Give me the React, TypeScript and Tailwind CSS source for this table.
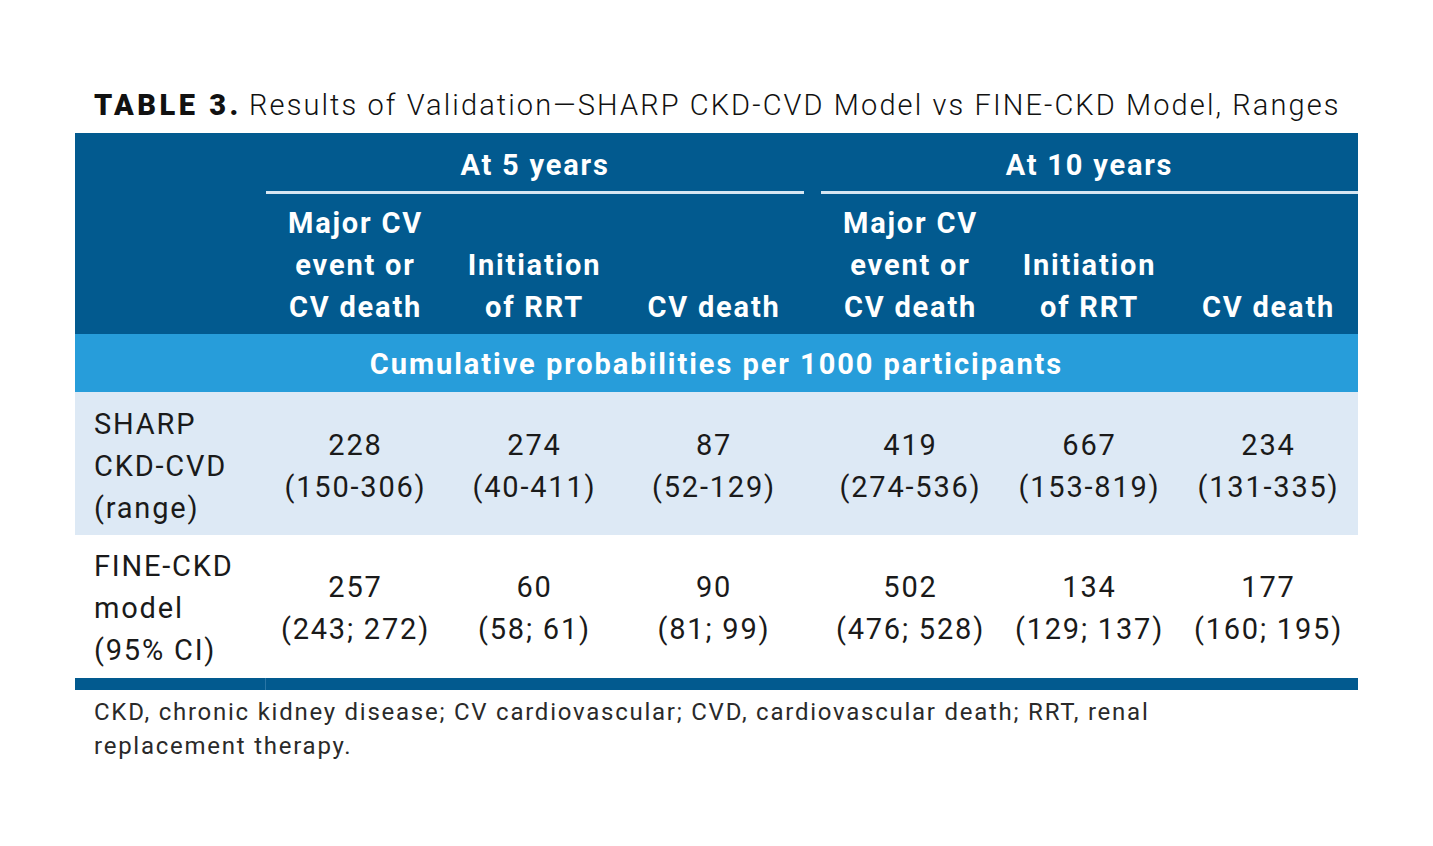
const font = { fontFamily: '"Roboto", "Liberation Sans", sans-serif' };

const sub = [
  ['Major CV', 'event or', 'CV death'],
  ['Initiation', 'of RRT'],
  ['CV death'],
];

const rows = [
  {
    label: ['SHARP', 'CKD-CVD', '(range)'],
    bg: 'bg-[#dde9f5]',
    vals: [
      ['228', '(150-306)'],
      ['274', '(40-411)'],
      ['87', '(52-129)'],
      ['419', '(274-536)'],
      ['667', '(153-819)'],
      ['234', '(131-335)'],
    ],
  },
  {
    label: ['FINE-CKD', 'model', '(95% CI)'],
    bg: 'bg-white',
    vals: [
      ['257', '(243; 272)'],
      ['60', '(58; 61)'],
      ['90', '(81; 99)'],
      ['502', '(476; 528)'],
      ['134', '(129; 137)'],
      ['177', '(160; 195)'],
    ],
  },
];

function SubHead({ lines }: { lines: string[] }) {
  return (
    <div className="h-[140px] flex flex-col justify-end items-center text-center pb-[6px] leading-[42px]">
      {lines.map((l) => (
        <span key={l}>{l}</span>
      ))}
    </div>
  );
}

export default function App() {
  const cols = 'grid grid-cols-[191px_179px_179px_180px_17px_179px_179px_179px]';
  return (
    <div className="w-[1433px] h-[846px] bg-white" style={font}>
      <div className="pt-[83px] pl-[75px]">
        <h1 className="pl-[19px] text-[29px] leading-[44px] text-[#111] whitespace-nowrap">
          <span className="font-black tracking-[3.5px]">TABLE 3.</span>{' '}
          <span className="font-light tracking-[2.1px]">Results of Validation—SHARP CKD-CVD Model vs FINE-CKD Model, Ranges</span>
        </h1>
        <div className="w-[1283px] mt-[6px] tracking-[1.8px]">
          {/* Header */}
          <div className={`${cols} bg-[#025a8f] text-white font-bold text-[29px]`}>
            <div className="row-span-2" />
            <div className="col-span-3 flex flex-col items-center">
              <div className="h-[58px] leading-[64px]">At 5 years</div>
              <div className="w-full h-[3px] bg-[#d6e6f2]" />
            </div>
            <div />
            <div className="col-span-3 flex flex-col items-center">
              <div className="h-[58px] leading-[64px]">At 10 years</div>
              <div className="w-full h-[3px] bg-[#d6e6f2]" />
            </div>
            {[...sub, null, ...sub].map((s, i) =>
              s ? <SubHead key={i} lines={s} /> : <div key={i} />
            )}
          </div>
          <div className="h-[58px] pt-[4px] bg-[#279dda] text-white font-bold text-[29px] tracking-[1.95px] flex items-center justify-center">
            Cumulative probabilities per 1000 participants
          </div>
          {rows.map((r, ri) => (
            <div key={r.label[0]} className={`${cols} ${r.bg} ${ri === 0 ? 'pt-[4px]' : 'pt-[2px]'} text-[29px] text-[#1a1a1a] leading-[42px] h-[143px]`}>
              <div className="pl-[19px] flex flex-col justify-center">
                {r.label.map((l) => (
                  <span key={l}>{l}</span>
                ))}
              </div>
              {r.vals.map((v, i) => (
                <div key={i} className={`flex flex-col items-center justify-center ${i === 3 ? 'col-start-6' : ''}`}>
                  <span>{v[0]}</span>
                  <span>{v[1]}</span>
                </div>
              ))}
            </div>
          ))}
          <div className="h-[12px] bg-[#025a8f] flex">
            <div className="w-[191px] border-r border-[#2a76a6]" />
          </div>
          <p className="pl-[19px] pt-[5px] text-[24px] leading-[34px] text-[#2a2a2a] tracking-[1.75px] w-[1100px]">
            CKD, chronic kidney disease; CV cardiovascular; CVD, cardiovascular death; RRT, renal replacement therapy.
          </p>
        </div>
      </div>
    </div>
  );
}
